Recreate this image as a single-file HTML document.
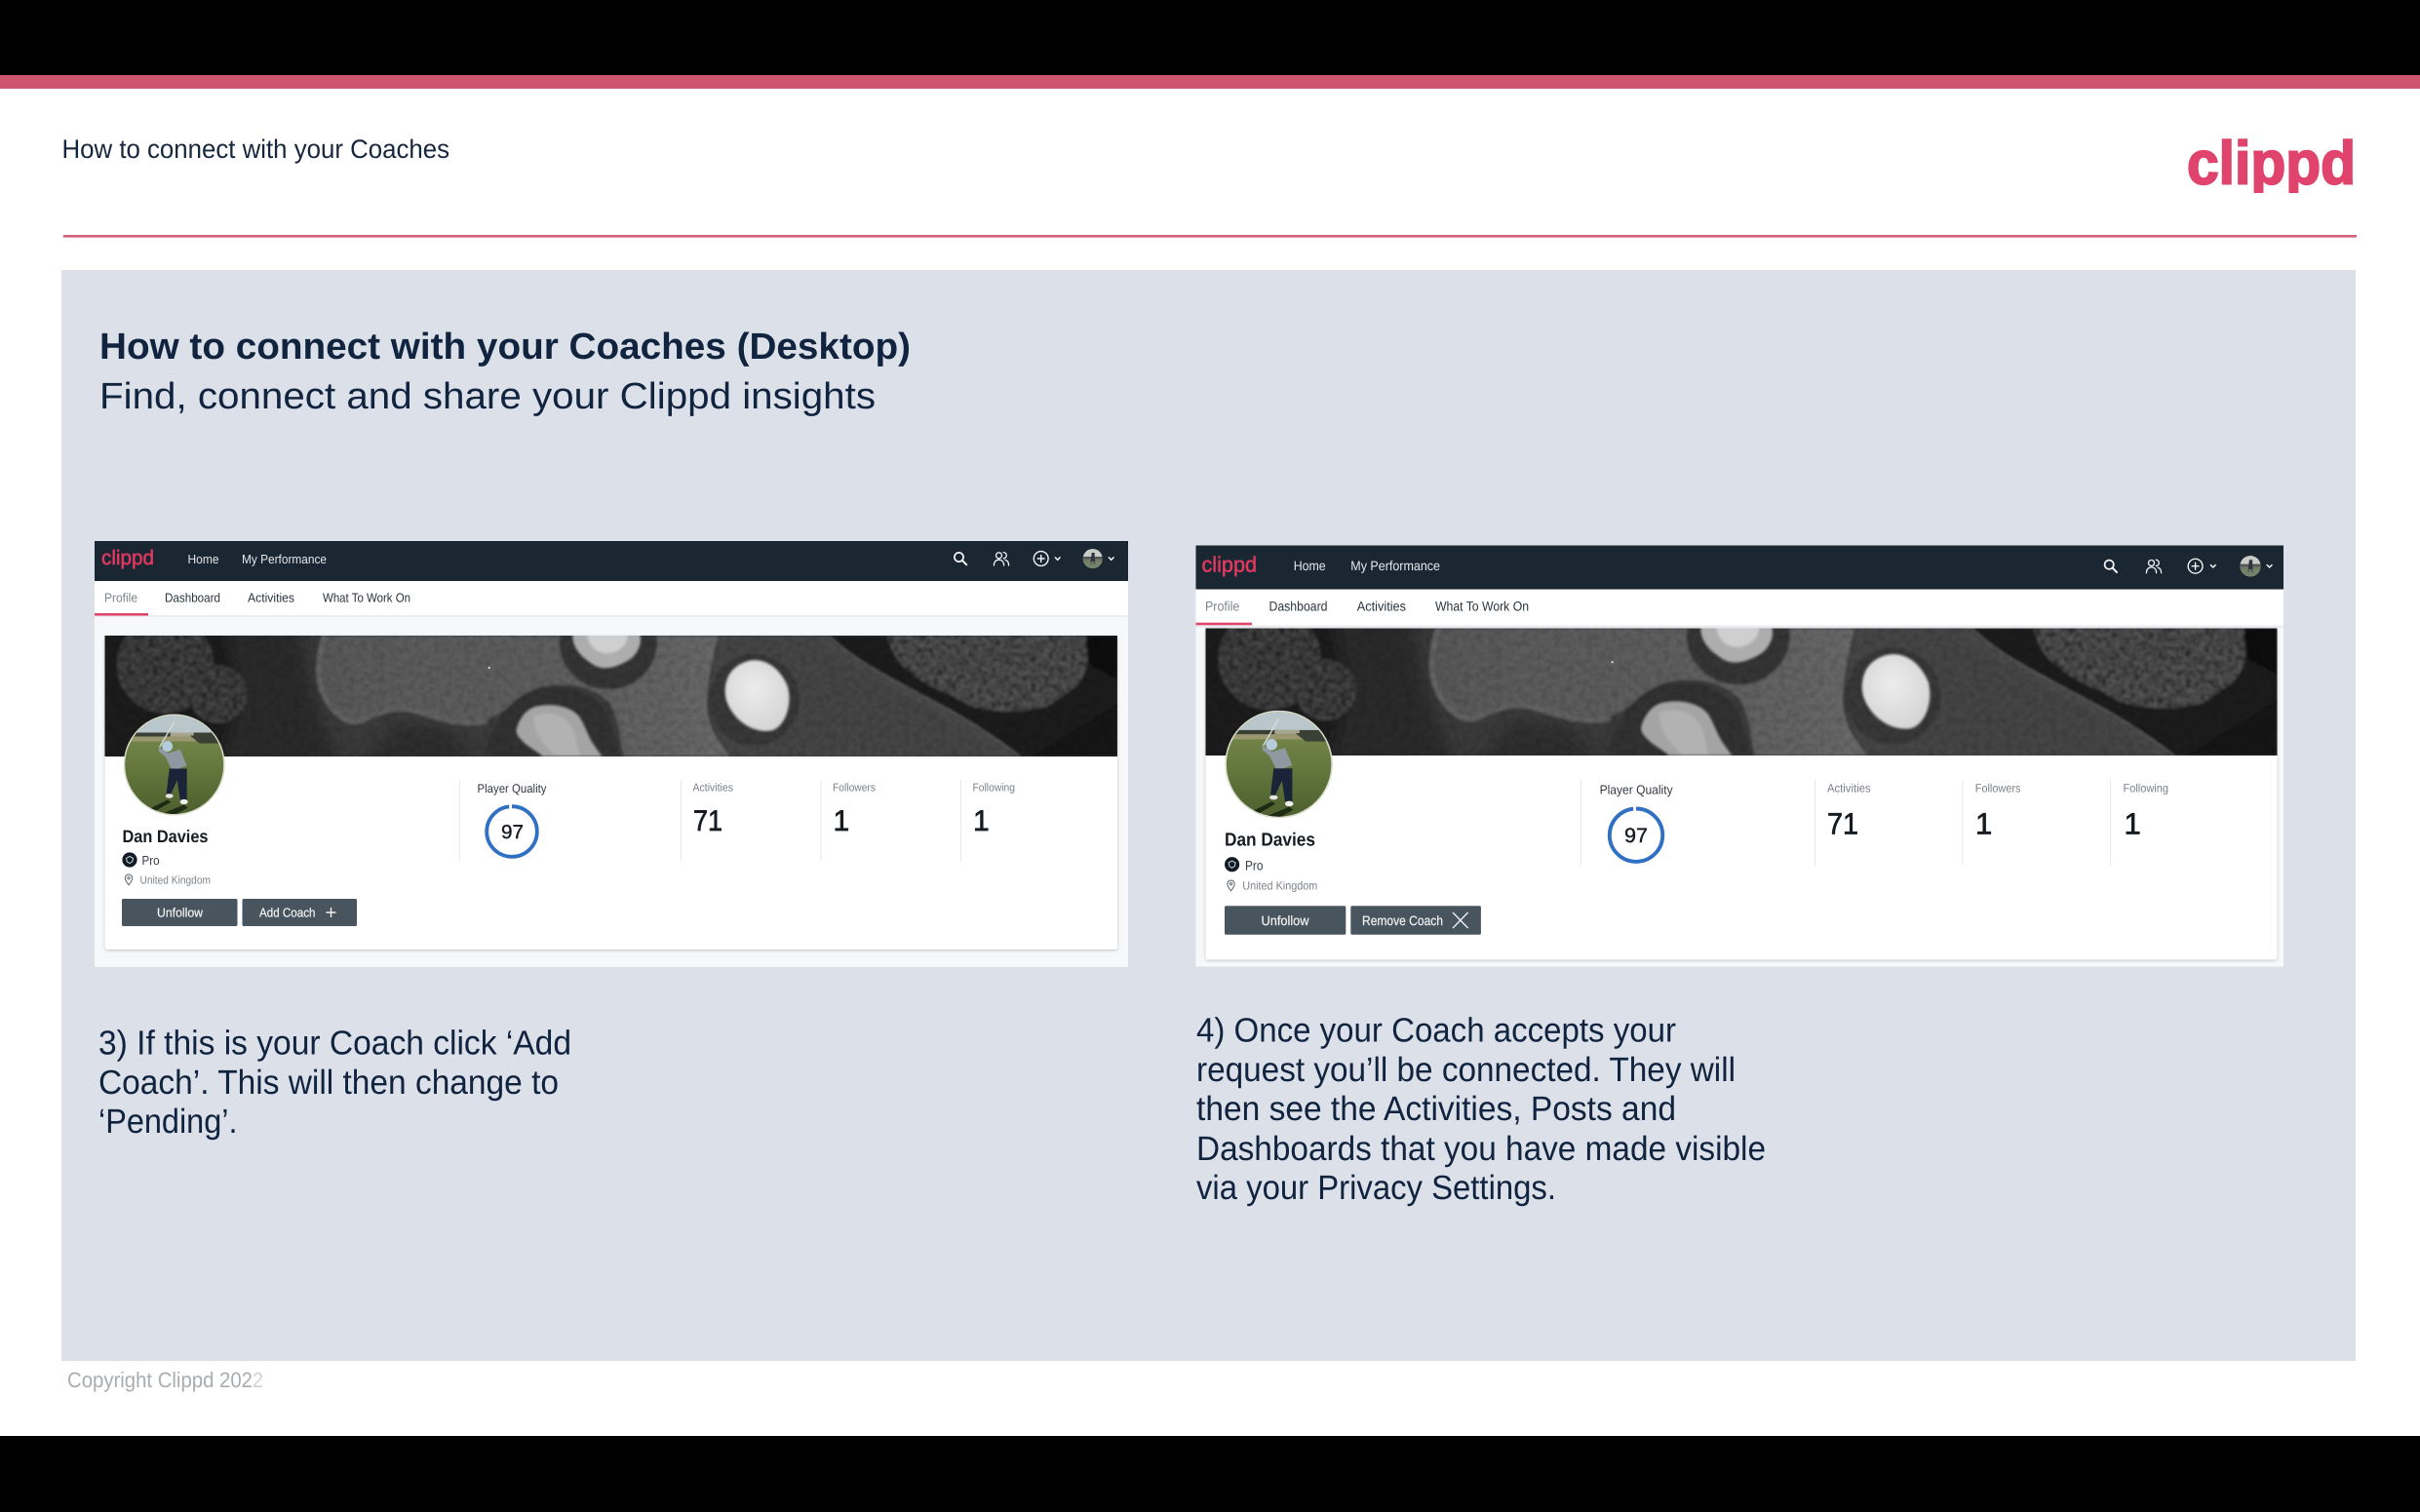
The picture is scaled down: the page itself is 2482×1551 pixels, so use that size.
<!DOCTYPE html>
<html lang="en">
<head>
<meta charset="utf-8">
<title>How to connect with your Coaches</title>
<style>
html,body{margin:0;padding:0;background:#fff;width:2482px;height:1551px;overflow:hidden}
svg{display:block}
text{font-family:"Liberation Sans",Arial,sans-serif;text-rendering:geometricPrecision}
.nav{font-size:13px;fill:#e4e7ea}
.tab{font-size:13px;fill:#2a333c}
.tabon{font-size:13px;fill:#7d848b}
.name{font-size:18px;font-weight:700;fill:#161c22}
.pro{font-size:13px;fill:#333a42}
.loc{font-size:11.5px;fill:#7d848b}
.btn{font-size:13px;fill:#f1f3f4;stroke:#f1f3f4;stroke-width:.2}
.pq{font-size:12.5px;fill:#333a42}
.lab{font-size:11.5px;fill:#7a8087}
.num{font-size:30px;fill:#161c22;stroke:#161c22;stroke-width:.7}
.q{font-size:20px;fill:#161c22;stroke:#161c22;stroke-width:.4}
.cap{font-size:35px;fill:#10233f}
.ic{fill:none;stroke:#f2f4f5;stroke-linecap:round;stroke-linejoin:round}
</style>
</head>
<body>
<svg xmlns="http://www.w3.org/2000/svg" width="2482" height="1551" viewBox="0 0 2482 1551">
<defs>
<clipPath id="logoclip"><rect x="2230" y="130" width="200" height="68"/></clipPath>
<filter id="tex" x="-5%" y="-5%" width="110%" height="110%">
<feTurbulence type="fractalNoise" baseFrequency=".22" numOctaves="3" seed="7"/>
<feColorMatrix values="0 0 0 0 0 0 0 0 0 0 0 0 0 0 0 1.9 0 0 0 -0.62"/>
<feComposite in2="SourceAlpha" operator="in" result="n"/>
<feMerge><feMergeNode in="SourceGraphic"/><feMergeNode in="n"/></feMerge>
<feGaussianBlur stdDeviation=".6"/>
</filter>
<filter id="grain" x="0" y="0" width="100%" height="100%">
<feTurbulence type="fractalNoise" baseFrequency=".16" numOctaves="3" seed="11"/>
<feColorMatrix values="0 0 0 0 0 0 0 0 0 0 0 0 0 0 0 1.5 0 0 0 -0.52"/>
</filter>
<filter id="soft" x="-5%" y="-5%" width="110%" height="110%"><feGaussianBlur stdDeviation="1.2"/></filter>
<filter id="soft3" x="-20%" y="-20%" width="140%" height="140%"><feGaussianBlur stdDeviation="7"/></filter>
<filter id="sh" x="-3%" y="-3%" width="106%" height="106%"><feDropShadow dx="0" dy="1" stdDeviation="1.5" flood-color="#000" flood-opacity=".22"/></filter>
<linearGradient id="grass" x1="0" y1="0" x2="0" y2="1"><stop offset="0" stop-color="#7e8f52"/><stop offset=".5" stop-color="#66793e"/><stop offset="1" stop-color="#4c5f2e"/></linearGradient>
<linearGradient id="fair" x1="0" y1="0" x2="1" y2="0"><stop offset="0" stop-color="#595959"/><stop offset=".6" stop-color="#5e5e5e"/><stop offset="1" stop-color="#686868"/></linearGradient>
<radialGradient id="rockg" cx=".45" cy=".4" r=".7"><stop offset="0" stop-color="#ececec"/><stop offset="1" stop-color="#d2d2d2"/></radialGradient>

<symbol id="ban" viewBox="0 0 1038 124" preserveAspectRatio="none">
<rect width="1038" height="124" fill="#3b3b3b"/>
<g filter="url(#soft3)">
<path d="M-20 -20H200C205 40 220 90 250 144H-20Z" fill="#292929"/>
<path d="M-20 -20H120L140 60 115 144H-20Z" fill="#1b1b1b"/>
<path d="M250 144L300 90 350 96 400 144Z" fill="#2d2d2d"/>
</g>
<g filter="url(#soft)">
<g filter="url(#tex)"><circle cx="62" cy="30" r="50" fill="#4a4a4a"/><circle cx="116" cy="60" r="30" fill="#4a4a4a"/></g>
<path d="M227 0C218 25 216 50 231 70 240 84 250 90 262 86 280 78 295 70 315 75 345 84 370 92 392 86 415 78 425 58 450 52 480 47 505 55 518 70 528 90 528 110 532 124H642C625 105 615 85 618 60 620 35 625 15 629 0Z" fill="url(#fair)"/>
<path d="M225 0C217 25 215 50 229 70 240 85 250 91 262 88 280 80 295 72 315 77 345 86 370 94 392 88" fill="none" stroke="#6a6a6a" stroke-width="5" opacity=".8"/>
<path d="M388 124C396 92 415 62 445 54 480 47 508 62 518 88 524 105 526 115 528 124Z" fill="#323232"/>
<ellipse cx="516" cy="8" rx="50" ry="47" fill="#363636"/>
<path d="M629 0H739C790 50 860 70 925 124H640C625 100 618 80 620 58 622 35 625 15 629 0Z" fill="#454545"/>
<ellipse cx="666" cy="66" rx="46" ry="47" fill="#383838"/>
<path d="M739 0C790 50 860 70 940 124H1038V0Z" fill="#1e1e1e"/>
<path d="M735 0C785 50 860 66 930 124" fill="none" stroke="#4a4a4a" stroke-width="9"/>
<path d="M742 0C790 46 862 64 938 124" fill="none" stroke="#5e5e5e" stroke-width="1.3"/>
<path d="M802 0C806 15 812 28 824 36 838 48 852 56 866 60 880 70 895 76 906 76 925 80 945 78 966 73 985 60 998 52 1002 43 1010 30 1006 15 1006 0Z" fill="#585858" filter="url(#tex)"/>
<path d="M1006 0H1038V45L1010 30Z" fill="#0a0a0a"/>
<path d="M950 124L1038 70V124Z" fill="#141414"/>
</g>
<rect width="1038" height="124" filter="url(#grain)" opacity=".18"/>
<g filter="url(#soft)">
<path d="M422 96C425 85 432 74 445 72 462 69 480 74 487 84 493 94 496 104 500 110 504 116 507 120 510 124H449C442 118 432 113 428 108 424 104 421 100 422 96Z" fill="#a4a4a4"/>
<path d="M440 82C458 76 474 84 480 96 484 106 484 116 488 124H462C450 112 438 98 440 82Z" fill="#b2b2b2"/>
<path d="M480 -3H548C552 8 546 22 532 28 520 34 508 36 498 28 486 20 478 10 480 -3Z" fill="#adadad"/>
<path d="M495 -3H535C538 6 530 16 518 18 506 20 494 10 495 -3Z" fill="#cfcfcf"/>
<path d="M660 26C678 22 693 35 700 52 705 70 698 92 685 97 670 101 652 92 643 78 633 64 635 50 640 40 645 32 652 28 660 26Z" fill="url(#rockg)"/>
</g>
<circle cx="394" cy="33" r="1.1" fill="#ddd"/>
</symbol>

<symbol id="ava" viewBox="0 0 104 104">
<clipPath id="avc"><circle cx="52" cy="52" r="50.5"/></clipPath>
<circle cx="52" cy="52" r="52" fill="#d9dccb"/>
<g clip-path="url(#avc)">
<rect width="104" height="104" fill="url(#grass)"/>
<rect width="104" height="20" fill="#b9c6cb"/>
<rect y="19" width="104" height="5" fill="#3a4034"/>
<rect x="48" y="19" width="24" height="4" fill="#a7a68c"/>
<rect y="23" width="104" height="5" fill="#9b9770"/>
<path d="M68 22H100V30H78Z" fill="#3a4034"/>
<path d="M25 98L45 88 49 90 30 101ZM38 103L62 93 66 96 48 106Z" fill="#1f2a14"/>
<path d="M37 34L52 8" stroke="#d8dcd8" stroke-width="1.3"/>
<path d="M36 34L46 40 58 36 65 53 50 58 43 44 36 38Z" fill="#8e98a1"/>
<path d="M47 56H65V88H58L55 68 48 83 44 81Z" fill="#1a2438"/>
<circle cx="45" cy="33" r="5.5" fill="#b4cbdc"/>
<ellipse cx="62" cy="90" rx="4" ry="2.6" fill="#eee"/>
<ellipse cx="47" cy="84" rx="4" ry="2.2" fill="#e6e6e6"/>
</g>
</symbol>

<symbol id="mini" viewBox="0 0 20 20">
<clipPath id="mc"><circle cx="10" cy="10" r="10"/></clipPath>
<g clip-path="url(#mc)">
<rect width="20" height="20" fill="#c8cbc6"/>
<rect y="10" width="20" height="10" fill="#6e7a62"/>
<rect y="8" width="20" height="2.5" fill="#555"/>
<path d="M9 4h3v6l1 6h-2l-1-4-1 4H7.5Z" fill="#2e3540"/>
<rect x="0" y="13" width="20" height="7" fill="#7f8c70" opacity=".5"/>
</g>
</symbol>

<g id="search" class="ic"><circle cx="-1.5" cy="-1.5" r="4.6" stroke-width="1.7"/><path d="M2 2L6.3 6.3" stroke-width="2"/></g>
<g id="people" class="ic" stroke-width="1.3"><circle cx="-2.5" cy="-3.2" r="3"/><path d="M2.2 -6.4a3.1 3.1 0 0 1 0 6.2"/><path d="M-7.6 7c0-3.8 2.2-5.8 5.1-5.8S2.6 3.2 2.6 7M4 1.4C6.3 2 7.6 4 7.6 7"/></g>
<g id="plusc" class="ic" stroke-width="1.4"><circle r="7.4"/><path d="M-3.4 0H3.4M0 -3.4V3.4"/></g>
<g id="chev" class="ic" stroke-width="1.5"><path d="M-2.4 -1.1L0 1.3 2.4 -1.1"/></g>
<g id="proi"><circle r="7.6" fill="#101a24"/><path d="M-3.6 -1.6L0 -3.6 3.6 -1.6 2.6 2 0 3.6-2.6 2Z" fill="none" stroke="#cfd4d8" stroke-width="1"/></g>
<g id="pin" fill="none" stroke="#666d74" stroke-width="1.1"><path d="M0 5.8C-2.6 2.6-3.7 .8-3.7 -1.2a3.7 3.7 0 0 1 7.4 0C3.7 .8 2.6 2.6 0 5.8Z"/><circle cy="-1.3" r="1.2"/></g>
</defs>

<rect width="2482" height="1551" fill="#fff"/>
<rect width="2482" height="77" fill="#000"/>
<rect y="77" width="2482" height="14" fill="#cf5470"/>
<rect y="1473" width="2482" height="78" fill="#000"/>

<text x="63.5" y="162" font-size="27" fill="#16263c" textLength="397.5" lengthAdjust="spacingAndGlyphs">How to connect with your Coaches</text>
<text x="2243" y="188.5" font-size="62.5" font-weight="700" fill="#e0446c" stroke="#e0446c" stroke-width="2" textLength="173" lengthAdjust="spacingAndGlyphs" clip-path="url(#logoclip)">clippd</text>
<rect x="65" y="241" width="2352" height="2.6" fill="#d2607a"/>

<rect x="63" y="277" width="2353" height="1119" fill="#dce0e8"/>
<text x="102" y="368" font-size="38" font-weight="700" fill="#10233f" textLength="832" lengthAdjust="spacingAndGlyphs">How to connect with your Coaches (Desktop)</text>
<text x="102" y="419" font-size="38" fill="#10233f" textLength="796" lengthAdjust="spacingAndGlyphs">Find, connect and share your Clippd insights</text>

<!-- LEFT CARD -->
<rect x="97" y="555" width="1060" height="437" fill="#f7f8fa"/>
<rect x="97" y="555" width="1060" height="41" fill="#1a2733"/>
<rect x="97" y="596" width="1060" height="35" fill="#fff"/>
<rect x="97" y="631" width="1060" height="2" fill="#eceef1"/>
<text x="104" y="579" font-size="21" fill="#e0395f" stroke="#e0395f" stroke-width=".5" textLength="54" lengthAdjust="spacingAndGlyphs">clippd</text>
<text class="nav" x="192.5" y="578" textLength="32" lengthAdjust="spacingAndGlyphs">Home</text>
<text class="nav" x="248" y="578" textLength="87" lengthAdjust="spacingAndGlyphs">My Performance</text>
<use href="#search" x="985" y="573"/>
<use href="#people" x="1027" y="573"/>
<use href="#plusc" x="1067.7" y="573"/>
<use href="#chev" x="1084.7" y="573"/>
<use href="#mini" x="1110.7" y="563" width="20" height="20"/>
<use href="#chev" x="1139.7" y="573"/>
<text class="tabon" x="107" y="617.5" textLength="34" lengthAdjust="spacingAndGlyphs">Profile</text>
<text class="tab" x="169" y="617.5" textLength="57" lengthAdjust="spacingAndGlyphs">Dashboard</text>
<text class="tab" x="254" y="617.5" textLength="48" lengthAdjust="spacingAndGlyphs">Activities</text>
<text class="tab" x="331" y="617.5" textLength="90" lengthAdjust="spacingAndGlyphs">What To Work On</text>
<rect x="97" y="629" width="55" height="2.6" fill="#e0466a"/>
<rect x="107.5" y="652" width="1038.5" height="322" rx="3" fill="#fff" filter="url(#sh)"/>
<use href="#ban" x="107.5" y="652" width="1038.5" height="124"/>
<use href="#ava" x="126.7" y="732.5" width="104" height="104"/>
<text class="name" x="125.5" y="864" textLength="88" lengthAdjust="spacingAndGlyphs">Dan Davies</text>
<use href="#proi" x="133" y="882"/>
<text class="pro" x="145.5" y="887" textLength="18" lengthAdjust="spacingAndGlyphs">Pro</text>
<use href="#pin" x="132" y="902"/>
<text class="loc" x="143.5" y="906.5" textLength="72.5" lengthAdjust="spacingAndGlyphs">United Kingdom</text>
<rect x="125" y="922" width="118.5" height="28" rx="1.5" fill="#48555f"/>
<text class="btn" x="161" y="940.5" textLength="47" lengthAdjust="spacingAndGlyphs">Unfollow</text>
<rect x="248.5" y="922" width="117.5" height="28" rx="1.5" fill="#48555f"/>
<text class="btn" x="266" y="940.5" textLength="57.5" lengthAdjust="spacingAndGlyphs">Add Coach</text>
<path d="M334.5 936H344.5M339.5 931V941" stroke="#f1f3f4" stroke-width="1.4" fill="none"/>
<rect x="471" y="800" width="1" height="83" fill="#e6e8eb"/>
<text class="pq" x="489.5" y="813" textLength="71" lengthAdjust="spacingAndGlyphs">Player Quality</text>
<circle cx="525" cy="853" r="25.8" fill="none" stroke="#2f6fc4" stroke-width="3.8" stroke-dasharray="159 3" transform="rotate(-90 525 853)"/>
<text class="q" x="514" y="860" textLength="23" lengthAdjust="spacingAndGlyphs">97</text>
<rect x="698" y="800" width="1" height="83" fill="#e6e8eb"/>
<rect x="841.5" y="800" width="1" height="83" fill="#e6e8eb"/>
<rect x="985" y="800" width="1" height="83" fill="#e6e8eb"/>
<text class="lab" x="710.5" y="811.5" textLength="41.5" lengthAdjust="spacingAndGlyphs">Activities</text>
<text class="lab" x="854" y="811.5" textLength="44" lengthAdjust="spacingAndGlyphs">Followers</text>
<text class="lab" x="997.5" y="811.5" textLength="43.5" lengthAdjust="spacingAndGlyphs">Following</text>
<text class="num" x="711" y="852" textLength="30" lengthAdjust="spacingAndGlyphs">71</text>
<text class="num" x="854.5" y="852">1</text>
<text class="num" x="998" y="852">1</text>

<!-- RIGHT CARD -->
<rect x="1226.5" y="559.5" width="1115.5" height="432" fill="#f7f8fa"/>
<rect x="1226.5" y="559.5" width="1115.5" height="45" fill="#1a2733"/>
<rect x="1226.5" y="604.5" width="1115.5" height="37" fill="#fff"/>
<rect x="1226.5" y="641.5" width="1115.5" height="2.5" fill="#eceef1"/>
<text x="1232.5" y="586.5" font-size="22" fill="#e0395f" stroke="#e0395f" stroke-width=".5" textLength="56.5" lengthAdjust="spacingAndGlyphs">clippd</text>
<text class="nav" x="1326.7" y="585" style="font-size:13.7px" textLength="33" lengthAdjust="spacingAndGlyphs">Home</text>
<text class="nav" x="1385.3" y="585" style="font-size:13.7px" textLength="91.7" lengthAdjust="spacingAndGlyphs">My Performance</text>
<use href="#search" x="2164.7" y="580.7"/>
<use href="#people" x="2209" y="580.7"/>
<use href="#plusc" x="2251.6" y="580.7"/>
<use href="#chev" x="2269.8" y="580.7"/>
<use href="#mini" x="2297.3" y="570" width="21.4" height="21.4"/>
<use href="#chev" x="2327.6" y="580.7"/>
<text class="tabon" x="1236" y="626.5" style="font-size:13.7px" textLength="35.3" lengthAdjust="spacingAndGlyphs">Profile</text>
<text class="tab" x="1301.5" y="626.5" style="font-size:13.7px" textLength="60" lengthAdjust="spacingAndGlyphs">Dashboard</text>
<text class="tab" x="1391.8" y="626.5" style="font-size:13.7px" textLength="50.2" lengthAdjust="spacingAndGlyphs">Activities</text>
<text class="tab" x="1472" y="626.5" style="font-size:13.7px" textLength="96" lengthAdjust="spacingAndGlyphs">What To Work On</text>
<rect x="1226.5" y="638.7" width="57.5" height="2.6" fill="#e0466a"/>
<rect x="1236.5" y="644.5" width="1099" height="340" rx="3" fill="#fff" filter="url(#sh)"/>
<use href="#ban" x="1236.5" y="644.5" width="1099" height="130.5"/>
<use href="#ava" x="1256.3" y="728.7" width="110.6" height="110.6"/>
<text class="name" x="1256" y="867.5" style="font-size:19px" textLength="93" lengthAdjust="spacingAndGlyphs">Dan Davies</text>
<use href="#proi" x="1263.6" y="886.7"/>
<text class="pro" x="1277" y="892.5" style="font-size:13.7px" textLength="18.5" lengthAdjust="spacingAndGlyphs">Pro</text>
<use href="#pin" x="1262.5" y="908"/>
<text class="loc" x="1274.3" y="912.5" style="font-size:12px" textLength="77" lengthAdjust="spacingAndGlyphs">United Kingdom</text>
<rect x="1256" y="929.3" width="124.3" height="29.4" rx="1.5" fill="#48555f"/>
<text class="btn" x="1293.5" y="949" style="font-size:13.7px" textLength="49" lengthAdjust="spacingAndGlyphs">Unfollow</text>
<rect x="1385.3" y="929.3" width="133.6" height="29.4" rx="1.5" fill="#48555f"/>
<text class="btn" x="1397" y="949" style="font-size:13.7px" textLength="83" lengthAdjust="spacingAndGlyphs">Remove Coach</text>
<path d="M1490 936L1505.6 952M1505.6 936L1490 952" stroke="#f1f3f4" stroke-width="1.3" fill="none"/>
<rect x="1621" y="800" width="1" height="87.7" fill="#e6e8eb"/>
<text class="pq" x="1640.6" y="814.3" style="font-size:13px" textLength="75" lengthAdjust="spacingAndGlyphs">Player Quality</text>
<circle cx="1678" cy="856.7" r="27.2" fill="none" stroke="#2f6fc4" stroke-width="3.9" stroke-dasharray="167.7 3.2" transform="rotate(-90 1678 856.7)"/>
<text class="q" x="1666" y="864" style="font-size:21px" textLength="24" lengthAdjust="spacingAndGlyphs">97</text>
<rect x="1861" y="800" width="1" height="87.7" fill="#e6e8eb"/>
<rect x="2012.5" y="800" width="1" height="87.7" fill="#e6e8eb"/>
<rect x="2164" y="800" width="1" height="87.7" fill="#e6e8eb"/>
<text class="lab" x="1874" y="812.7" style="font-size:12px" textLength="44.5" lengthAdjust="spacingAndGlyphs">Activities</text>
<text class="lab" x="2025.8" y="812.7" style="font-size:12px" textLength="46.6" lengthAdjust="spacingAndGlyphs">Followers</text>
<text class="lab" x="2177.5" y="812.7" style="font-size:12px" textLength="46.5" lengthAdjust="spacingAndGlyphs">Following</text>
<text class="num" x="1874" y="855.7" style="font-size:31px" textLength="32" lengthAdjust="spacingAndGlyphs">71</text>
<text class="num" x="2026" y="855.7" style="font-size:31px">1</text>
<text class="num" x="2178.5" y="855.7" style="font-size:31px">1</text>

<!-- CAPTIONS -->
<text class="cap" x="101" y="1081.5" textLength="485" lengthAdjust="spacingAndGlyphs">3) If this is your Coach click ‘Add</text>
<text class="cap" x="101" y="1122" textLength="472" lengthAdjust="spacingAndGlyphs">Coach’. This will then change to</text>
<text class="cap" x="101" y="1162" textLength="142.5" lengthAdjust="spacingAndGlyphs">‘Pending’.</text>
<text class="cap" x="1227" y="1068.5" textLength="492" lengthAdjust="spacingAndGlyphs">4) Once your Coach accepts your</text>
<text class="cap" x="1227" y="1109" textLength="553" lengthAdjust="spacingAndGlyphs">request you’ll be connected. They will</text>
<text class="cap" x="1227" y="1149" textLength="492" lengthAdjust="spacingAndGlyphs">then see the Activities, Posts and</text>
<text class="cap" x="1227" y="1190" textLength="584" lengthAdjust="spacingAndGlyphs">Dashboards that you have made visible</text>
<text class="cap" x="1227" y="1230" textLength="369" lengthAdjust="spacingAndGlyphs">via your Privacy Settings.</text>

<text x="69" y="1423" font-size="22" fill="#a9acb1" textLength="190" lengthAdjust="spacingAndGlyphs">Copyright Clippd 202</text>
<text x="259" y="1423" font-size="22" fill="#d0d2d6" textLength="11" lengthAdjust="spacingAndGlyphs">2</text>
</svg>
</body>
</html>
